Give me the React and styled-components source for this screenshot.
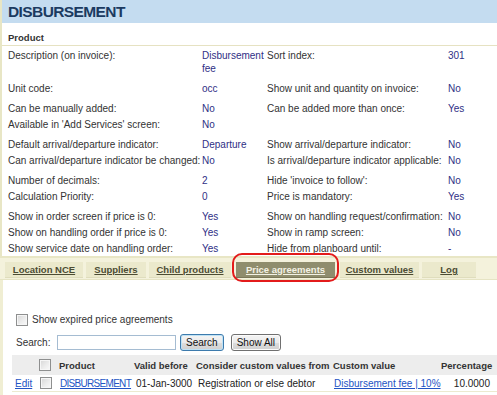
import React from 'react';
import styled, { createGlobalStyle } from 'styled-components';

const GlobalStyle = createGlobalStyle`
  html, body {
    margin: 0;
    padding: 0;
    background: #ffffff;
  }
  body {
    font-family: "Liberation Sans", Arial, sans-serif;
    font-size: 10px;
    color: #333333;
  }
`;

const Page = styled.div`
  width: 497px;
  height: 395px;
  overflow: hidden;
  background: #ffffff;
`;

const TopPanel = styled.div`
  border-left: 2px solid #e8e6c5;
  border-bottom: 2px solid #e8e6c5;
`;

const TitleBar = styled.div`
  height: 23px;
  display: flex;
  align-items: center;
  padding-left: 6px;
  background: #c4dcf0;
  color: #1b3a60;
  font-size: 15.5px;
  font-weight: bold;
  letter-spacing: -0.6px;
`;

const SectionHead = styled.div`
  padding: 8px 0 1px 6px;
  line-height: 13px;
  font-size: 9.5px;
  font-weight: bold;
  color: #333333;
  border-bottom: 1px solid #e6e2c2;
`;

const Fields = styled.div`
  padding: 1px 0 0 6px;
`;

const Group = styled.div`
  padding-top: 4px;
  &:first-child {
    padding-top: 0;
  }
`;

const Row = styled.div`
  display: grid;
  grid-template-columns: 194px 65px 181px 1fr;
  line-height: 13px;
  padding: 1.5px 0;
`;

const Label = styled.span`
  white-space: nowrap;
  color: #333333;
`;

const Value = styled.span`
  color: #2f2f85;
  padding-right: 2px;
`;

const TabBar = styled.div`
  display: flex;
  gap: 3px;
  padding: 4px 0 1px 5px;
  background: #f4f2dc;
  border-bottom: 1px solid #e6e4c4;
`;

const Tab = styled.div`
  position: relative;
  box-sizing: border-box;
  width: ${(p) => p.$w}px;
  height: 16px;
  line-height: 16px;
  margin: ${(p) => (p.$active ? '0 2px' : '0')};
  text-align: center;
  font-size: 9.5px;
  font-weight: bold;
  text-decoration: underline;
  white-space: nowrap;
  color: ${(p) => (p.$active ? '#f3f2e4' : '#4c4c33')};
  background: ${(p) => (p.$active ? '#8f8d6d' : '#ebe9cc')};
  border-bottom: 1px solid ${(p) => (p.$active ? '#7a7858' : '#dfddbd')};
`;

const Ring = styled.div`
  position: absolute;
  left: -4px;
  top: -9px;
  width: 107px;
  height: 29px;
  box-sizing: border-box;
  border: 2px solid #e31b1b;
  border-radius: 10px;
  pointer-events: none;
`;

const LowerPanel = styled.div`
  border-left: 3px solid #f0eed3;
  padding-top: 33px;
  height: 200px;
`;

const CheckRow = styled.label`
  display: flex;
  align-items: center;
  gap: 4px;
  padding-left: 13px;
  height: 13px;
  color: #333333;
`;

const Check = styled.span`
  display: inline-block;
  box-sizing: border-box;
  width: 12px;
  height: 12px;
  vertical-align: middle;
  border: 1px solid #8e8f8f;
  background: linear-gradient(135deg, #d6d6d6 0%, #eeeeee 60%, #fafafa 100%);
  box-shadow: inset 0 0 0 1px #f6f6f6;
`;

const SearchRow = styled.div`
  display: flex;
  align-items: center;
  height: 17px;
  margin-top: 8px;
  padding-left: 13px;
`;

const SearchLabel = styled.span`
  width: 41px;
  color: #333333;
`;

const SearchInput = styled.input`
  box-sizing: border-box;
  width: 119px;
  height: 15px;
  margin: 0 4px 0 0;
  padding: 0 2px;
  border: 1px solid #a5bcd2;
  font: inherit;
  outline: none;
`;

const Button = styled.button`
  box-sizing: border-box;
  height: 17px;
  margin: 0 ${(p) => p.$gap}px 0 0;
  padding: 0 5px;
  font-family: "Liberation Sans", Arial, sans-serif;
  font-size: 10px;
  color: #111111;
  border-radius: 3px;
  border: 1px solid ${(p) => (p.$focus ? '#3d7bad' : '#707070')};
  background: linear-gradient(#f4f4f4, #ebebeb 50%, #dddddd 51%, #d0d0d0);
  box-shadow: inset 0 0 0 1px ${(p) => (p.$focus ? '#bfe2f5' : '#fbfbfb')};
`;

const Table = styled.table`
  margin: 4px 0 0 9px;
  width: 485px;
  table-layout: fixed;
  border-collapse: collapse;
  font-size: 10px;
`;

const HeadCell = styled.th`
  height: 20px;
  padding: 0 3px;
  background: #ededed;
  text-align: left;
  font-size: 9.5px;
  font-weight: bold;
  color: #333333;
  white-space: nowrap;
  overflow: hidden;
`;

const Cell = styled.td`
  height: 16px;
  padding: 0 ${(p) => (p.$right ? '7px' : '0')} 0 ${(p) => p.$pl || 3}px;
  text-align: ${(p) => (p.$right ? 'right' : 'left')};
  color: #222222;
  white-space: nowrap;
  border-bottom: 1px solid #ecead0;
`;

const Link = styled.a`
  color: #2254c4;
  text-decoration: underline;
  letter-spacing: ${(p) => (p.$caps ? '-0.7px' : 'normal')};
`;

const groups = [
  [['Description (on invoice):', 'Disbursement fee', 'Sort index:', '301']],
  [['Unit code:', 'occ', 'Show unit and quantity on invoice:', 'No']],
  [
    ['Can be manually added:', 'No', 'Can be added more than once:', 'Yes'],
    ["Available in 'Add Services' screen:", 'No', '', ''],
  ],
  [
    ['Default arrival/departure indicator:', 'Departure', 'Show arrival/departure indicator:', 'No'],
    ['Can arrival/departure indicator be changed:', 'No', 'Is arrival/departure indicator applicable:', 'No'],
  ],
  [
    ['Number of decimals:', '2', "Hide 'invoice to follow':", 'No'],
    ['Calculation Priority:', '0', 'Price is mandatory:', 'Yes'],
  ],
  [
    ['Show in order screen if price is 0:', 'Yes', 'Show on handling request/confirmation:', 'No'],
    ['Show on handling order if price is 0:', 'Yes', 'Show in ramp screen:', 'No'],
    ['Show service date on handling order:', 'Yes', 'Hide from planboard until:', '-'],
  ],
];

const tabs = [
  { label: 'Location NCE', w: 78 },
  { label: 'Suppliers', w: 60 },
  { label: 'Child products', w: 82 },
  { label: 'Price agreements', w: 99, active: true },
  { label: 'Custom values', w: 79 },
  { label: 'Log', w: 54 },
];

export default function App() {
  return (
    <>
      <GlobalStyle />
      <Page>
        <TopPanel>
          <TitleBar>DISBURSEMENT</TitleBar>
          <SectionHead>Product</SectionHead>
          <Fields>
            {groups.map((rows, gi) => (
              <Group key={gi}>
                {rows.map((r, ri) => (
                  <Row key={ri}>
                    <Label>{r[0]}</Label>
                    <Value>{r[1]}</Value>
                    <Label>{r[2]}</Label>
                    <Value>{r[3]}</Value>
                  </Row>
                ))}
              </Group>
            ))}
          </Fields>
        </TopPanel>

        <TabBar>
          {tabs.map((t) => (
            <Tab key={t.label} $w={t.w} $active={t.active}>
              {t.label}
              {t.active && <Ring />}
            </Tab>
          ))}
        </TabBar>

        <LowerPanel>
          <CheckRow>
            <Check />
            Show expired price agreements
          </CheckRow>
          <SearchRow>
            <SearchLabel>Search:</SearchLabel>
            <SearchInput type="text" />
            <Button $focus $gap={7}>Search</Button>
            <Button $gap={0}>Show All</Button>
          </SearchRow>
          <Table>
            <colgroup>
              <col style={{ width: 24 }} />
              <col style={{ width: 20 }} />
              <col style={{ width: 75 }} />
              <col style={{ width: 62 }} />
              <col style={{ width: 137 }} />
              <col style={{ width: 108 }} />
              <col style={{ width: 59 }} />
            </colgroup>
            <thead>
              <tr>
                <HeadCell />
                <HeadCell>
                  <Check />
                </HeadCell>
                <HeadCell>Product</HeadCell>
                <HeadCell>Valid before</HeadCell>
                <HeadCell>Consider custom values from</HeadCell>
                <HeadCell>Custom value</HeadCell>
                <HeadCell>Percentage</HeadCell>
              </tr>
            </thead>
            <tbody>
              <tr>
                <Cell><Link>Edit</Link></Cell>
                <Cell $pl={4}><Check /></Cell>
                <Cell $pl={4}><Link $caps>DISBURSEMENT</Link></Cell>
                <Cell $pl={5}>01-Jan-3000</Cell>
                <Cell $pl={5}>Registration or else debtor</Cell>
                <Cell $pl={4}><Link>Disbursement fee | 10%</Link></Cell>
                <Cell $right>10.0000</Cell>
              </tr>
            </tbody>
          </Table>
        </LowerPanel>
      </Page>
    </>
  );
}
